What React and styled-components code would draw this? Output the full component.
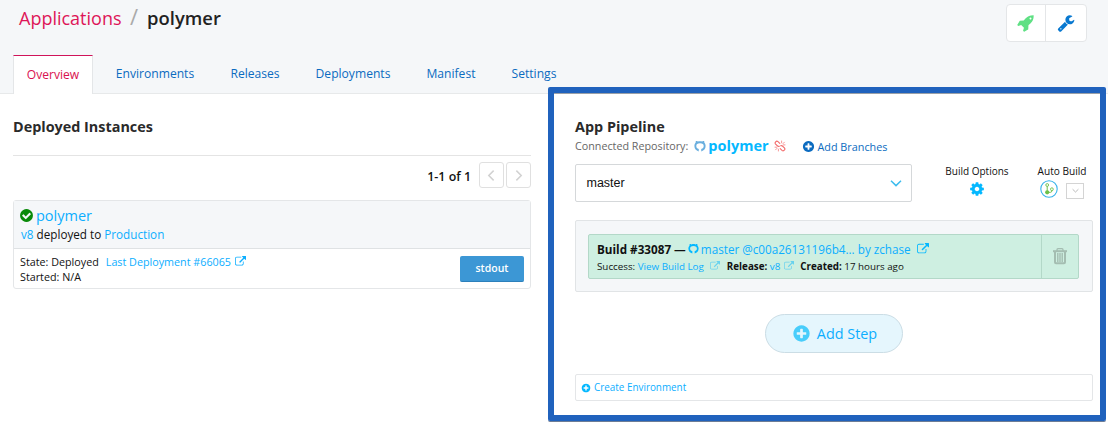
import React from 'react';
import styled, { createGlobalStyle } from 'styled-components';

const GlobalStyle = createGlobalStyle`
  * { box-sizing: border-box; }
  body {
    margin: 0;
    background: #fff;
    color: #111;
    font-family: "Open Sans", "Noto Sans", sans-serif;
    font-size: 12px;
  }
`;

/* ---------- icons ---------- */

const Svg = styled.svg`
  display: block;
  flex: none;
  width: ${(p) => p.$size}px;
  height: ${(p) => p.$size}px;
  margin: ${(p) => p.$m || '0'};
  color: ${(p) => p.$color || 'currentColor'};
  fill: currentColor;
`;

const DISC =
  'q0 209-103 385.5t-279.5 279.5-385.5 103-385.5-103-279.5-279.5-103-385.5 103-385.5 279.5-279.5 385.5-103 385.5 103 279.5 279.5 103 385.5z';

const PATHS = {
  external:
    'M1408 928v320q0 119-84.5 203.5t-203.5 84.5h-832q-119 0-203.5-84.5t-84.5-203.5v-832q0-119 84.5-203.5t203.5-84.5h704q14 0 23 9t9 23v64q0 14-9 23t-23 9h-704q-66 0-113 47t-47 113v832q0 66 47 113t113 47h832q66 0 113-47t47-113v-320q0-14 9-23t23-9h64q14 0 23 9t9 23zm384-864v512q0 26-19 45t-45 19-45-19l-176-176-652 652q-10 10-23 10t-23-10l-114-114q-10-10-10-23t10-23l652-652-176-176q-19-19-19-45t19-45 45-19h512q26 0 45 19t19 45z',
  plus:
    'M1344 960v-128q0-26-19-45t-45-19h-256v-256q0-26-19-45t-45-19h-128q-26 0-45 19t-19 45v256h-256q-26 0-45 19t-19 45v128q0 26 19 45t45 19h256v256q0 26 19 45t45 19h128q26 0 45-19t19-45v-256h256q26 0 45-19t19-45zm320-64' + DISC,
  check:
    'M1412 734q0-28-18-46l-91-90q-19-19-45-19t-45 19l-408 407-226-226q-19-19-45-19t-45 19l-91 90q-18 18-18 46 0 27 18 45l362 362q19 19 45 19 27 0 46-19l543-543q18-18 18-45zm252 162' + DISC,
  rocket:
    'M1440 448q0-40-28-68t-68-28-68 28-28 68 28 68 68 28 68-28 28-68zm224-288q0 249-75.5 430.5t-253.5 360.5q-81 80-195 176l-20 379q-2 16-16 26l-384 224q-7 4-16 4-12 0-23-9l-64-64q-13-14-8-32l85-276-281-281-276 85q-3 1-9 1-14 0-23-9l-64-64q-17-19-5-39l224-384q10-14 26-16l379-20q96-114 176-195 188-187 358-258t431-71q14 0 24 9.5t10 22.5z',
  wrench:
    'M448 1472q0-26-19-45t-45-19-45 19-19 45 19 45 45 19 45-19 19-45zm644-420l-682 682q-37 37-90 37-52 0-91-37l-106-108q-38-36-38-90 0-53 38-91l681-681q39 98 114.5 173.5t173.5 114.5zm634-435q0 39-23 106-47 134-164.5 217.5t-258.5 83.5q-185 0-316.5-131.5t-131.5-316.5 131.5-316.5 316.5-131.5q58 0 121.5 16.5t107.5 46.5q16 11 16 28t-16 28l-293 169v224l193 107q5-3 79-48.5t135.5-81 70.5-35.5q15 0 23.5 10t8.5 25z',
  cog:
    'M1152 896q0-106-75-181t-181-75-181 75-75 181 75 181 181 75 181-75 75-181zm512-109v222q0 12-8 23t-20 13l-185 28q-19 54-39 91 35 50 107 138 10 12 10 25t-9 23q-27 37-99 108t-94 71q-12 0-26-9l-138-108q-44 23-91 38-16 136-29 186-7 28-36 28h-222q-14 0-24.5-8.5t-11.5-21.5l-28-184q-49-16-90-37l-141 107q-10 9-25 9-14 0-25-11-126-114-165-168-7-10-7-23 0-12 8-23 15-21 51-66.5t54-70.5q-27-50-41-99l-183-27q-13-2-21-12.5t-8-23.5v-222q0-12 8-23t19-13l186-28q14-46 39-92-40-57-107-138-10-12-10-24 0-10 9-23 26-36 98.5-107.5t94.5-71.5q13 0 26 10l138 107q44-23 91-38 16-136 29-186 7-28 36-28h222q14 0 24.5 8.5t11.5 21.5l28 184q49 16 90 37l142-107q9-9 24-9 13 0 25 10 129 119 165 170 7 8 7 22 0 12-8 23-15 21-51 66.5t-54 70.5q26 50 41 98l183 28q13 2 21 12.5t8 23.5z',
};

const Icon = ({ name, size, color, m }) => (
  <Svg viewBox="0 0 1792 1792" $size={size} $color={color} $m={m}>
    <path d={PATHS[name]} />
  </Svg>
);

const Octocat = ({ size, color, m }) => (
  <Svg viewBox="0 0 12 12" $size={size} $color={color} $m={m}>
    <path d="M4.7 11.4 C2.1 10.8 .4 8.8 .4 6.1 C.4 4.6 .9 3.5 1.7 2.6 C1.6 2.1 1.7 1.6 1.9 1.1 C2.6 1.1 3.2 1.2 3.9 1.5 C5.2 1.1 6.8 1.1 8.1 1.5 C8.8 1.2 9.4 1.1 10.1 1.1 C10.3 1.6 10.4 2.1 10.3 2.6 C11.1 3.5 11.6 4.6 11.6 6.1 C11.6 8.8 9.9 10.8 7.3 11.4 L7.2 9.1 C8.9 8.7 9.7 7.6 9.7 6.1 C9.7 4.3 8.6 3.3 6 3.3 C3.4 3.3 2.3 4.3 2.3 6.1 C2.3 7.6 3.1 8.7 4.8 9.1 Z" />
  </Svg>
);

const Unlink = ({ size, color, m }) => (
  <Svg viewBox="0 0 12 12" $size={size} $color={color} $m={m}>
    <g fill="none" stroke="currentColor" strokeWidth="1.1" strokeLinecap="round">
      <path d="M5.8 3.4 L4 1.7 A1.7 1.7 0 0 0 1.6 4.1 L3.6 6 A1.7 1.7 0 0 0 5.3 6.2" />
      <path d="M6.2 8.6 L8 10.3 A1.7 1.7 0 0 0 10.4 7.9 L8.4 6 A1.7 1.7 0 0 0 6.7 5.8" />
      <path d="M7.6 1v1.8M9 3.6l1.4-1.4M9.2 4.9h1.8M4.4 11V9.2M3 8.4 1.6 9.8M2.8 7.2H1" strokeWidth=".7" />
    </g>
  </Svg>
);

const Chevron = ({ size, color, dir, width = 1.4 }) => {
  const d = { left: 'M8 1.5 3.5 6 8 10.5', right: 'M4 1.5 8.5 6 4 10.5', down: 'M1 3.8 6 8.6 11 3.8' }[dir];
  return (
    <Svg viewBox="0 0 12 12" $size={size} $color={color}>
      <path d={d} fill="none" stroke="currentColor" strokeWidth={width} />
    </Svg>
  );
};

const Trash = () => (
  <Svg viewBox="0 0 18 18" $size={18} $color="#a4bdb1">
    <g fill="none" stroke="currentColor">
      <path d="M2 4.2h14" strokeWidth="2" />
      <path d="M6 4V2.7Q6 1.6 7 1.6h4Q12 1.6 12 2.7V4" strokeWidth="1.3" />
      <path d="M4 4.5v10.7Q4 16.2 5 16.2h8Q14 16.2 14 15.2V4.5" strokeWidth="2" />
      <path d="M6.8 6v9M9 6v9M11.2 6v9" strokeWidth="1.4" />
    </g>
  </Svg>
);

const BranchBadge = () => (
  <Svg viewBox="0 0 18 18" $size={18}>
    <circle cx="9" cy="9" r="8.2" fill="#fff" stroke="#35b2ea" strokeWidth="1.1" />
    <path d="M7.2 6v6.5M7.2 12.3H10.5Q11.9 12.3 11.9 10.6" fill="none" stroke="#6cc04a" strokeWidth="1" />
    <circle cx="7.2" cy="5" r="1.4" fill="#fff" stroke="#6cc04a" strokeWidth=".9" />
    <circle cx="11.9" cy="9.2" r="1.4" fill="#fff" stroke="#6cc04a" strokeWidth=".9" />
    <circle cx="7.2" cy="12.3" r="2.1" fill="#6cc04a" />
  </Svg>
);

/* ---------- text ---------- */

const Text = styled.span`
  font-size: ${(p) => p.$size || 11}px;
  font-weight: ${(p) => p.$weight || 400};
  color: ${(p) => p.$color || '#111'};
  margin: ${(p) => p.$m || '0'};
  white-space: pre;
`;

const Line = styled.div`
  display: flex;
  align-items: center;
  height: ${(p) => p.$h}px;
  white-space: pre;
`;

/* ---------- header ---------- */

const Page = styled.div`
  position: relative;
  width: 1111px;
  height: 426px;
  overflow: hidden;
`;

const Header = styled.header`
  display: flex;
  flex-direction: column;
  justify-content: space-between;
  width: 1108px;
  height: 94px;
  background: #f5f7f9;
  border-bottom: 1px solid #e7e9ea;
`;

const TopBar = styled.div`
  display: flex;
  justify-content: space-between;
  padding: 4px 21px 0 19px;
`;

const Crumbs = styled.h1`
  display: flex;
  align-items: center;
  height: 28px;
  margin: 0;
  font-weight: 400;
`;

const ButtonGroup = styled.div`
  display: flex;
  width: 81px;
  height: 38px;
  background: #fff;
  border: 1px solid #e4e6e8;
  border-radius: 4px;
`;

const GroupButton = styled.button`
  display: flex;
  flex: 1;
  align-items: center;
  justify-content: center;
  padding: 0;
  border: 0;
  background: none;
  &:first-child { flex: 0 0 38px; }
  & + & { border-left: 1px solid #e4e6e8; }
`;

const Tabs = styled.nav`
  display: flex;
  margin: 0 0 -1px 13px;
`;

const Tab = styled.a`
  width: ${(p) => p.$w}px;
  height: 39px;
  text-align: center;
  line-height: ${(p) => (p.$active ? 38 : 36)}px;
  font-size: 12.1px;
  color: ${(p) => (p.$active ? '#d9124f' : '#0b6bc0')};
  background: ${(p) => (p.$active ? '#fff' : 'transparent')};
  border: 1px solid ${(p) => (p.$active ? '#e4e6e8' : 'transparent')};
  border-top-color: ${(p) => (p.$active ? '#d0145a' : 'transparent')};
  border-bottom: 0;
`;

/* ---------- columns ---------- */

const Columns = styled.main`
  display: grid;
  grid-template-columns: 518px 518px;
  column-gap: 44px;
  padding-left: 13px;
`;

const Column = styled.section`
  display: flex;
  flex-direction: column;
  padding-top: 23px;
`;

const Heading = styled.h2`
  margin: 0;
  height: 20px;
  line-height: 20px;
  font-size: 14.4px;
  font-weight: 700;
  color: #2a2a2a;
`;

const Pager = styled.div`
  display: flex;
  align-items: center;
  justify-content: flex-end;
  gap: 2px;
  margin-top: 18px;
  padding-top: 6px;
  height: 33px;
  border-top: 1px solid #e4e4e4;
`;

const PageButton = styled.button`
  display: flex;
  align-items: center;
  justify-content: center;
  width: 25px;
  height: 26px;
  padding: 0;
  background: #fff;
  border: 1px solid #e0e0e0;
  border-radius: 3px;
`;

const Card = styled.article`
  height: 89px;
  margin-top: 12px;
  border: 1px solid #e4e6e8;
  border-radius: 3px;
`;

const CardHead = styled.div`
  height: 48px;
  padding: 4px 6px 0;
  background: #f5f7f9;
  border-bottom: 1px solid #dfe2e4;
`;

const CardBody = styled.div`
  display: flex;
  justify-content: space-between;
  padding: 5px 6px 0;
`;

const StdoutButton = styled.button`
  width: 64px;
  height: 26px;
  margin-top: 2px;
  padding: 0 0 2px;
  font: 600 10.5px "Open Sans", sans-serif;
  color: #fff;
  background: #3c97d5;
  border: 0;
  border-bottom: 1px solid #2c80bb;
  border-radius: 2px;
`;

const Controls = styled.div`
  display: flex;
  height: 38px;
  margin-top: 9px;
`;

const Select = styled.div`
  display: flex;
  align-items: center;
  justify-content: space-between;
  width: 337px;
  padding: 0 9px 0 10.5px;
  border: 1px solid #d5d8da;
  border-radius: 2px;
  font: 12.5px "Liberation Sans", Arial, sans-serif;
`;

const Option = styled.div`
  display: flex;
  flex-direction: column;
  align-items: center;
  width: ${(p) => p.$w}px;
  margin-left: ${(p) => p.$ml}px;
`;

const OptionRow = styled.div`
  display: flex;
  align-items: center;
  gap: 8px;
  height: 20px;
  margin-top: ${(p) => p.$mt}px;
`;

const MiniButton = styled.button`
  display: flex;
  align-items: center;
  justify-content: center;
  width: 18px;
  height: 16px;
  margin-top: 3px;
  padding: 0;
  background: #fff;
  border: 1px solid #d4d4d4;
`;

const Stage = styled.div`
  height: 72px;
  margin-top: 18px;
  padding: 13px 13px 0 12px;
  background: #f5f7f9;
  border: 1px solid #e1e4e6;
  border-radius: 2px;
`;

const Build = styled.div`
  display: flex;
  height: 45px;
  background: #ceefe1;
  border: 1px solid #b3d8c8;
  border-radius: 2px;
`;

const BuildInfo = styled.div`
  flex: 1;
  padding: 4px 0 0 8px;
`;

const BuildDelete = styled.button`
  display: flex;
  align-items: center;
  justify-content: center;
  width: 37px;
  padding: 0 0 2px;
  background: none;
  border: 0;
  border-left: 1px solid #b3d8c8;
`;

const AddStep = styled.button`
  display: flex;
  align-items: center;
  align-self: center;
  justify-content: center;
  width: 138px;
  height: 39px;
  margin: 22px 0 0 0;
  padding: 0 0 1px 1px;
  font-family: inherit;
  background: #e5f6fd;
  border: 1px solid #cbdde5;
  border-radius: 20px;
`;

const CreateEnvironment = styled.div`
  display: flex;
  align-items: center;
  height: 27px;
  margin-top: 21px;
  padding: 0 0 1px 5px;
  border: 1px solid #e4e6e8;
  border-radius: 2px;
`;

const Highlight = styled.div`
  position: absolute;
  left: 548px;
  top: 87px;
  width: 558px;
  height: 334px;
  border: 6px solid #2062bd;
  border-radius: 2px;
  box-shadow: 0 1px 0 #6d7d96, inset 0 1px 0 #9aa0a8;
  pointer-events: none;
`;

const CYAN = '#0caeff';
const BRIGHT = '#04b8ff';
const BLUE = '#0b6bc0';

const TABS = [
  ['Overview', 80],
  ['Environments', 124],
  ['Releases', 76],
  ['Deployments', 120],
  ['Manifest', 76],
  ['Settings', 90],
];

export default function App() {
  return (
    <Page>
      <GlobalStyle />
      <Header>
        <TopBar>
          <Crumbs>
            <Text $size={18} $color="#de1558">Applications</Text>
            <Text $size={22} $color="#aaa" $m="-4px 9px 0 8.5px">/</Text>
            <Text $size={18.4} $weight={600} $color="#222" $m="-2px 0 0">polymer</Text>
          </Crumbs>
          <ButtonGroup>
            <GroupButton><Icon name="rocket" size={18} color="#5fe084" m="0 0 1px" /></GroupButton>
            <GroupButton><Icon name="wrench" size={18} color="#0878d0" m="0 1px 0 0" /></GroupButton>
          </ButtonGroup>
        </TopBar>
        <Tabs>
          {TABS.map(([label, w], i) => (
            <Tab key={label} $w={w} $active={i === 0}>{label}</Tab>
          ))}
        </Tabs>
      </Header>

      <Columns>
        <Column>
          <Heading>Deployed Instances</Heading>
          <Pager>
            <Text $size={12.4} $weight={600} $m="2px 6px 0 0">1-1 of 1</Text>
            <PageButton><Chevron size={13} dir="left" color="#d2d2d2" /></PageButton>
            <PageButton><Chevron size={13} dir="right" color="#d2d2d2" /></PageButton>
          </Pager>
          <Card>
            <CardHead>
              <Line $h={20}>
                <Icon name="check" size={15} color="#0a8a0a" m="1px 2px 0 -1px" />
                <Text $size={14.5} $color={CYAN}>polymer</Text>
              </Line>
              <Line $h={18}>
                <Text $size={11.7} $color={CYAN} $m="0 0 0 1px">v8</Text>
                <Text $size={11.7}> deployed to </Text>
                <Text $size={11.7} $color={CYAN}>Production</Text>
              </Line>
            </CardHead>
            <CardBody>
              <div>
                <Line $h={15}>
                  <Text $size={10.75}>State: Deployed</Text>
                  <Text $size={10.75} $color={CYAN} $m="0 4px 0 7px">Last Deployment #66065</Text>
                  <Icon name="external" size={11} color={CYAN} />
                </Line>
                <Line $h={15}><Text $size={10.75}>Started: N/A</Text></Line>
              </div>
              <StdoutButton>stdout</StdoutButton>
            </CardBody>
          </Card>
        </Column>

        <Column>
          <Heading>App Pipeline</Heading>
          <Line $h={18}>
            <Text $size={10.75} $color="#666">Connected Repository:</Text>
            <Octocat size={12} color="#69aede" m="0 2px 0 6px" />
            <Text $size={14.5} $weight={700} $color={BRIGHT} $m="-2px 5px 0 0">polymer</Text>
            <Unlink size={12} color="#f36a6a" m="0 16px 0 0" />
            <Icon name="plus" size={13} color={BLUE} m="0 3px 0 0" />
            <Text $size={10.8} $color={BLUE}>Add Branches</Text>
          </Line>
          <Controls>
            <Select>
              master
              <Chevron size={12} dir="down" color="#3cbcee" width={1.5} />
            </Select>
            <Option $w={64} $ml={33}>
              <Text $size={10}>Build Options</Text>
              <OptionRow $mt={1}><Icon name="cog" size={16} color={BRIGHT} /></OptionRow>
            </Option>
            <Option $w={50} $ml={28}>
              <Text $size={10.1}>Auto Build</Text>
              <OptionRow $mt={1}>
                <BranchBadge />
                <MiniButton><Chevron size={7} dir="down" color="#b5b5b5" width={1.6} /></MiniButton>
              </OptionRow>
            </Option>
          </Controls>
          <Stage>
            <Build>
              <BuildInfo>
                <Line $h={19}>
                  <Text $size={11.7} $weight={700}>Build #33087 — </Text>
                  <Octocat size={11} color={BRIGHT} m="0 2px 0 -1px" />
                  <Text $size={11.7} $color={CYAN}>master @c00a26131196b4... by zchase</Text>
                  <Icon name="external" size={12} color={BRIGHT} m="0 0 0 6px" />
                </Line>
                <Line $h={16}>
                  <Text $size={9.8}>Success: </Text>
                  <Text $size={9.8} $color={CYAN}>View Build Log</Text>
                  <Icon name="external" size={10} color="#69d2ee" m="0 7px 0 6px" />
                  <Text $size={9.8} $weight={700}>Release: </Text>
                  <Text $size={9.8} $color={CYAN}>v8</Text>
                  <Icon name="external" size={10} color="#69d2ee" m="0 6px 0 4px" />
                  <Text $size={9.8} $weight={700}>Created: </Text>
                  <Text $size={9.8}>17 hours ago</Text>
                </Line>
              </BuildInfo>
              <BuildDelete><Trash /></BuildDelete>
            </Build>
          </Stage>
          <AddStep>
            <Icon name="plus" size={19} color="#48cdfb" m="0 6px 0 0" />
            <Text $size={14.4} $color={CYAN}>Add Step</Text>
          </AddStep>
          <CreateEnvironment>
            <Icon name="plus" size={10} color={BRIGHT} m="2px 3px 0 0" />
            <Text $size={9.9} $color={CYAN}>Create Environment</Text>
          </CreateEnvironment>
        </Column>
      </Columns>
      <Highlight />
    </Page>
  );
}
